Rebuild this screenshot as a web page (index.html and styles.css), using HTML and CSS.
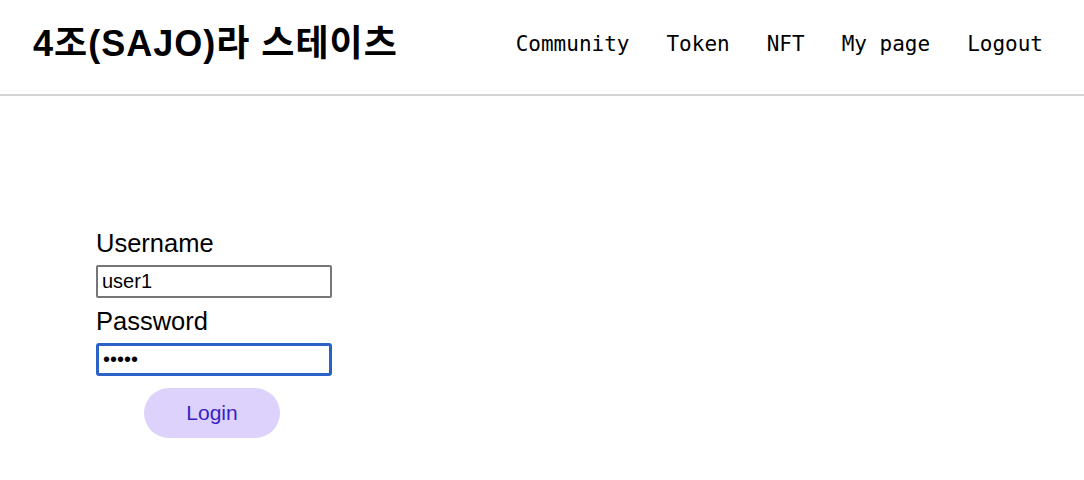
FILE: index.html
```html
<!DOCTYPE html>
<html lang="ko">
<head>
<meta charset="utf-8">
<title>4조(SAJO)라 스테이츠</title>
<link rel="stylesheet" href="styles.css">
</head>
<body>
<header class="header">
  <h1 class="logo">4조(SAJO)라 스테이츠</h1>
  <nav class="nav">
    <a class="nav-link" href="#">Community</a>
    <a class="nav-link" href="#">Token</a>
    <a class="nav-link" href="#">NFT</a>
    <a class="nav-link" href="#">My page</a>
    <a class="nav-link" href="#">Logout</a>
  </nav>
</header>
<main class="main">
  <form class="login-form">
    <label class="label" for="username">Username</label>
    <input class="input" id="username" type="text" value="user1">
    <label class="label" for="password">Password</label>
    <input class="input input-focus" id="password" type="password" value="abcde">
    <div class="actions">
      <button class="btn" type="button">Login</button>
    </div>
  </form>
</main>
</body>
</html>
```

FILE: styles.css
```css
* { box-sizing: border-box; }
html, body { margin: 0; padding: 0; background: #fff; }
body {
  font-family: "Liberation Sans", "Noto Sans CJK KR", sans-serif;
  color: #000;
}
.header {
  height: 96px;
  display: flex;
  align-items: center;
  justify-content: space-between;
  padding: 0 41px 6px 33px;
  border-bottom: 2px solid #d4d4d4;
}
.logo {
  margin: 0;
  font-size: 36px;
  line-height: 40px;
  font-weight: bold;
  font-family: "Liberation Sans", "Noto Sans CJK KR", sans-serif;
  letter-spacing: 1px;
}
.nav {
  display: flex;
  gap: 37px;
}
.nav-link {
  font-family: "DejaVu Sans Mono", monospace;
  font-size: 21px;
  color: #000;
  text-decoration: none;
}
.main {
  padding: 133px 0 0 96px;
}
.login-form {
  display: flex;
  flex-direction: column;
  align-items: flex-start;
  width: 236px;
}
.label {
  font-size: 25.5px;
  line-height: 28px;
  margin-bottom: 8px;
}
.input {
  width: 236px;
  height: 33px;
  border: 2px solid #767676;
  border-radius: 2px;
  padding: 0 4px;
  font-family: "Liberation Sans", sans-serif;
  font-size: 20px;
  color: #000;
  margin-bottom: 9px;
  outline: none;
}
.input-focus {
  border: 3px solid #2a62c8;
  border-radius: 3px;
  margin-bottom: 12px;
}
.actions {
  width: 100%;
  display: flex;
  justify-content: center;
  padding-right: 4px;
}
.btn {
  width: 136px;
  height: 50px;
  border: none;
  border-radius: 25px;
  background: #dcd2fc;
  color: #3a1fc2;
  font-family: "Liberation Sans", sans-serif;
  font-size: 21px;
}
```
